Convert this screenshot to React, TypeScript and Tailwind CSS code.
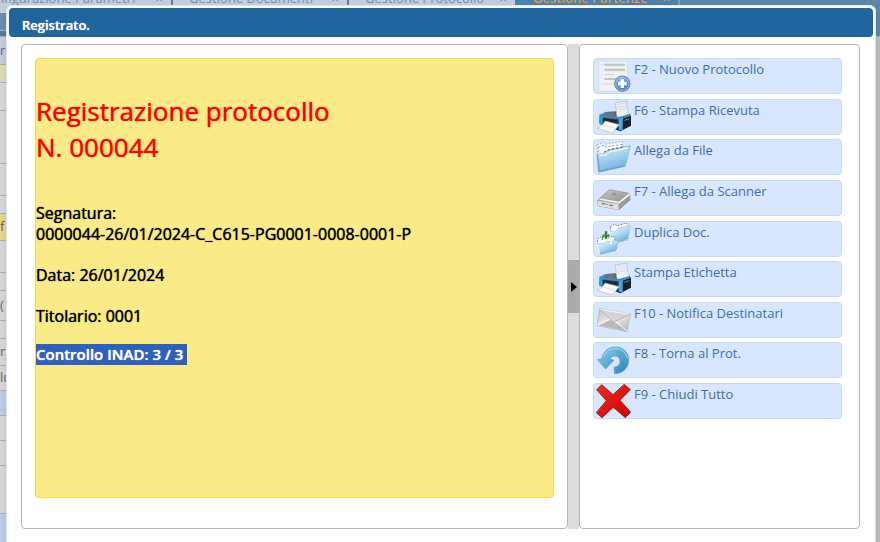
import type { ReactNode } from 'react';

type Tab = { label: string; active?: boolean; className: string };

const TABS: Tab[] = [
  { label: 'Configurazione Parametri', className: '-ml-9 w-[209px] pr-2' },
  { label: 'Gestione Documenti', className: 'w-[176px] pr-2' },
  { label: 'Gestione Protocollo', className: 'w-[168px] pr-2' },
  { label: 'Gestione Partenze', active: true, className: 'w-[163px] pr-2' },
];

// Form rows of the page that stays visible beside the dialog
const ROWS = [
  { text: '', className: 'h-[18px] bg-[#6b8cab]' },
  { text: '', className: 'h-[6px] bg-[#587b96]' },
  { text: 'r', className: 'h-[28px] bg-[#c3cbdd]' },
  { text: '', className: 'h-[18px] bg-[#ddd9b8]' },
  { text: '', className: 'h-[28px] bg-[#d5d5d5]' },
  { text: '', className: 'h-[53px] bg-[#d5d5d5]' },
  { text: '', className: 'h-[32px] bg-[#d5d5d5]' },
  { text: '', className: 'h-[18px] bg-[#d5d5d5]' },
  { text: 'f', className: 'h-[27px] bg-[#e2d48a]' },
  { text: '', className: 'h-[32px] bg-[#d5d5d5]' },
  { text: '', className: 'h-[18px] bg-[#d5d5d5]' },
  { text: '(', className: 'h-[30px] bg-[#d5d5d5]' },
  { text: '', className: 'h-[18px] bg-[#d5d5d5]' },
  { text: 'r', className: 'h-[27px] bg-[#d5d5d5]' },
  { text: 'lu', className: 'h-[25px] bg-[#d5d5d5]' },
  { text: '', className: 'h-[25px] bg-[#bccae0]' },
  { text: '', className: 'h-[25px] bg-[#d5d5d5]' },
  { text: '', className: 'h-[25px] bg-[#d5d5d5]' },
  { text: '', className: 'h-[48px] bg-[#d5d5d5]' },
  { text: '', className: 'h-[40px] bg-[#bccae0]' },
];

function Icon({ children }: { children: ReactNode }) {
  return (
    <svg viewBox="0 0 108 102" className="h-[34px] w-9 shrink-0" aria-hidden="true">
      {children}
    </svg>
  );
}

function NewDocIcon() {
  return (
    <Icon>
      <defs>
        <radialGradient id="plusFill" cx="45%" cy="30%" r="70%">
          <stop offset="0" stopColor="#9dc0ef" />
          <stop offset="1" stopColor="#3d6fbd" />
        </radialGradient>
      </defs>
      <path d="M11 6H98V96H11Z" fill="#f0f1f2" stroke="#d3d6db" strokeWidth="2" />
      <path d="M28 17H90M28 32H90M28 60H72" stroke="#bfc1c3" strokeWidth="6" />
      <path d="M28 47H56M28 75H62" stroke="#cfd1d3" strokeWidth="3" />
      <path d="M18 17h4M18 47h4M18 75h4" stroke="#c9ccd0" strokeWidth="3" />
      <circle cx="82" cy="74" r="23" fill="url(#plusFill)" stroke="#5580bd" strokeWidth="3" />
      <circle cx="82" cy="74" r="20" fill="none" stroke="#c4d8f4" strokeWidth="2" />
      <path d="M82 61V87M69 74H95" stroke="#fff" strokeWidth="10" />
    </Icon>
  );
}

function PrinterIcon() {
  return (
    <Icon>
      <defs>
        <linearGradient id="printerTop" x1="0" y1="0" x2="1" y2="1">
          <stop offset="0" stopColor="#87929b" />
          <stop offset=".5" stopColor="#343b42" />
          <stop offset="1" stopColor="#0b0f13" />
        </linearGradient>
      </defs>
      <path d="M14 46L30 36L58 34L101 38L108 48V77L76 94L60 88L14 72Z" fill="url(#printerTop)" />
      <path d="M60 9L96 3C94 18 98 30 103 43L67 53C62 38 65 23 60 9Z" fill="#edf0f2" stroke="#aeb5bb" strokeWidth="2" />
      <path d="M66 14L92 9M67 22L93 17M68 30L94 25" stroke="#cdd3d7" strokeWidth="2" />
      <path d="M28 41L57 37L65 51L88 50L74 56L22 48Z" fill="#66747f" />
      <path d="M13 44L27 39L22 73L12 70Z" fill="#349adb" />
      <path d="M16 47L73 56L104 47" fill="none" stroke="#2b91d5" strokeWidth="5" />
      <path d="M71 56L83 53V92L71 89Z" fill="#43a9e8" />
      <path d="M85 56L107 49V76L85 88Z" fill="#1b2127" />
      <path d="M88 61L103 56" stroke="#7c8891" strokeWidth="3" />
      <path d="M23 53L67 61V76L23 68Z" fill="#20262c" />
      <path d="M30 63L73 74C66 82 58 91 52 99L6 85C17 80 24 74 30 63Z" fill="#f7f8f8" stroke="#b4babf" strokeWidth="2" />
      <path d="M28 76L58 84" stroke="#dde1e4" strokeWidth="3" />
    </Icon>
  );
}

function FolderIcon() {
  return (
    <Icon>
      <defs>
        <linearGradient id="folderFront" x1="0" y1="0" x2=".4" y2="1">
          <stop offset="0" stopColor="#e2f4ff" />
          <stop offset="1" stopColor="#6fb0de" />
        </linearGradient>
      </defs>
      <path d="M6 15L27 7L31 13L82 4L86 24V79L10 94Z" fill="#f4f8fb" stroke="#829aad" strokeWidth="2" strokeDasharray="6 4" />
      <path d="M9 22L28 15L31 21L82 13L87 79L20 88Z" fill="#fafdff" stroke="#69727b" strokeWidth="2" strokeDasharray="7 5" />
      <path d="M6 42L30 41L38 31L106 17L91 79L11 97Z" fill="url(#folderFront)" stroke="#7dadcf" strokeWidth="2" />
      <path d="M13 46L33 45L41 36L98 24" fill="none" stroke="#ffffff" strokeWidth="3" />
      <path d="M26 37L43 29L69 24L86 20" fill="none" stroke="#4b5964" strokeWidth="3" strokeDasharray="8 5" />
      <path d="M8 45L14 94L86 78" fill="none" stroke="#5888ad" strokeWidth="2" />
    </Icon>
  );
}

function ScannerIcon() {
  return (
    <Icon>
      <defs>
        <linearGradient id="scannerLid" x1="0" y1="0" x2="1" y2="1">
          <stop offset="0" stopColor="#c9c9c5" />
          <stop offset="1" stopColor="#8f918f" />
        </linearGradient>
      </defs>
      <path d="M8 58L42 34L105 42V57L72 86L10 75Z" fill="#a6a8a6" stroke="#8b8c8a" strokeWidth="2" />
      <path d="M8 59L71 70V86L10 75Z" fill="#e0e0dd" />
      <path d="M71 70L105 44V57L72 86Z" fill="#9a9c9a" />
      <path d="M14 52L43 26L104 37L72 63Z" fill="url(#scannerLid)" stroke="#8b8d8a" strokeWidth="2" />
      <path d="M14 54L72 65L104 39" fill="none" stroke="#f4f4f2" strokeWidth="5" />
      <path d="M52 42L58 35L62 43" fill="none" stroke="#6581ac" strokeWidth="3" />
      <path d="M20 67L31 69M42 72L54 74" stroke="#838987" strokeWidth="5" />
      <path d="M34 70L38 71" stroke="#4f9d56" strokeWidth="4" />
    </Icon>
  );
}

function DuplicateIcon() {
  return (
    <Icon>
      <defs>
        <linearGradient id="copyFront" x1="0" y1="0" x2=".6" y2="1">
          <stop offset="0" stopColor="#f4fbff" />
          <stop offset=".5" stopColor="#b5dbf3" />
          <stop offset="1" stopColor="#5ba3d5" />
        </linearGradient>
      </defs>
      <path d="M46 14L60 6L65 12L94 3L99 11V53L51 64Z" fill="#fbfcfd" stroke="#7c8891" strokeWidth="3" strokeDasharray="5 4" />
      <path d="M42 27L62 28L70 18L106 11L98 52L49 68Z" fill="url(#copyFront)" stroke="#a3c8df" strokeWidth="2" />
      <path d="M7 50L22 43L28 50L58 43L65 83L11 96Z" fill="#fbfcfd" stroke="#75828b" strokeWidth="3" strokeDasharray="5 4" />
      <path d="M7 66L27 65L35 59L71 55L62 86L13 98Z" fill="url(#copyFront)" stroke="#8db9d6" strokeWidth="2" />
      <path d="M7 66L13 98M42 27L49 68" stroke="#f8ffff" strokeWidth="4" />
      <path d="M33 28V50M22 41H44" stroke="#2f8f2c" strokeWidth="7" />
      <path d="M22 54Q20 42 31 40" fill="none" stroke="#4aa845" strokeWidth="4" />
    </Icon>
  );
}

function MailIcon() {
  return (
    <Icon>
      <defs>
        <linearGradient id="envelope" x1="0" y1="0" x2="1" y2="1">
          <stop offset="0" stopColor="#bdbdbd" />
          <stop offset=".5" stopColor="#eeeeee" />
          <stop offset="1" stopColor="#acacac" />
        </linearGradient>
      </defs>
      <path d="M14 17L106 33L96 86L6 68Z" fill="url(#envelope)" stroke="#a9a29e" strokeWidth="2" strokeDasharray="6 3" />
      <path d="M7 67L47 50L96 84Z" fill="#b9b9b9" />
      <path d="M15 19L54 58L104 34Z" fill="#d4d4d4" stroke="#f8f8f8" strokeWidth="3" />
      <path d="M7 67L45 48M96 84L61 54" stroke="#fff" strokeWidth="3" />
      <path d="M15 19L54 58L105 34" fill="none" stroke="#858585" strokeWidth="2" />
    </Icon>
  );
}

function BackIcon() {
  return (
    <Icon>
      <defs>
        <linearGradient id="backArrow" x1="0" y1="0" x2="1" y2="1">
          <stop offset="0" stopColor="#8cd0e9" />
          <stop offset="1" stopColor="#2684b7" />
        </linearGradient>
      </defs>
      <path
        d="M21 47C23 25 41 12 62 12C85 12 101 29 101 50C101 74 85 90 62 92L58 91V72C69 72 76 64 75 54C74 44 68 39 60 39C51 39 46 43 46 49L57 51L32 78L7 50Z"
        fill="url(#backArrow)"
        stroke="#4ba3c8"
        strokeWidth="2"
      />
      <path d="M26 43C31 24 44 17 62 17C80 17 95 30 97 47" fill="none" stroke="#a9ddef" strokeWidth="3" />
    </Icon>
  );
}

function CloseIcon() {
  return (
    <Icon>
      <defs>
        <linearGradient id="cross" x1="0" y1="0" x2="1" y2="1">
          <stop offset="0" stopColor="#f52c22" />
          <stop offset="1" stopColor="#c90000" />
        </linearGradient>
      </defs>
      <path
        d="M5 17L20 2L54 32L88 1L106 17L75 49L107 85L91 101L55 70L21 101L4 86L34 50Z"
        fill="url(#cross)"
        stroke="#a52017"
        strokeWidth="3"
      />
    </Icon>
  );
}

const ACTIONS = [
  { label: 'F2 - Nuovo Protocollo', icon: NewDocIcon },
  { label: 'F6 - Stampa Ricevuta', icon: PrinterIcon },
  { label: 'Allega da File', icon: FolderIcon },
  { label: 'F7 - Allega da Scanner', icon: ScannerIcon },
  { label: 'Duplica Doc.', icon: DuplicateIcon },
  { label: 'Stampa Etichetta', icon: PrinterIcon },
  { label: 'F10 - Notifica Destinatari', icon: MailIcon },
  { label: 'F8 - Torna al Prot.', icon: BackIcon },
  { label: 'F9 - Chiudi Tutto', icon: CloseIcon },
];

function tabClass(tab: Tab) {
  const tone = tab.active
    ? 'border-[#7d9db8] bg-[#5080a6] font-semibold text-[#dd9a4e]'
    : 'border-[#4f7fa5] bg-[#c5cbd9] text-[#6f91b3]';
  return `flex h-6 shrink-0 items-start justify-between border-r-2 pl-4 ${tone} ${tab.className}`;
}

function PageBehind() {
  return (
    <div className="absolute inset-0 overflow-hidden bg-[#bcbcbc]" aria-hidden="true">
      <div className="flex h-[13px] items-end overflow-hidden bg-[#5c86a8] text-[13px] leading-[18px]">
        {TABS.map((tab) => (
          <div key={tab.label} className={tabClass(tab)}>
            <span>{tab.label}</span>
            <span className="font-bold">×</span>
          </div>
        ))}
      </div>
      <div className="flex justify-between text-[13px] text-[#666]">
        <div className="w-2 overflow-hidden">
          {ROWS.map((row, i) => (
            <div key={i} className={`flex items-center border-b border-b-[#9bb5c8] ${row.className}`}>
              {row.text}
            </div>
          ))}
        </div>
        <div className="h-6 w-8 border-b border-[#9bb5c8] bg-[#5c86a8]" />
      </div>
    </div>
  );
}

export default function App() {
  return (
    <div className="relative min-h-screen overflow-hidden font-['Open_Sans',sans-serif]">
      <PageBehind />
      <div
        role="dialog"
        aria-labelledby="dialog-title"
        className="relative mt-[5px] mr-1 ml-1.5 min-h-[560px] rounded-md border border-[#d9e8f4] bg-[#fdfdfd] p-0.5 shadow-md"
      >
        <h1
          id="dialog-title"
          className="flex h-[29px] items-center rounded-sm bg-[#21659f] px-[13px] pt-1.5 text-[13px] font-semibold text-white [text-shadow:0_0_1px_currentColor]"
        >
          Registrato.
        </h1>
        <main className="mt-[7px] mr-[13px] ml-3 flex h-[485px]">
          <section className="min-w-0 flex-1 rounded border border-[#b4b4b4] bg-white p-[13px]">
            <div className="h-[440px] rounded border border-[#f0d84f] bg-[#fbeb88] pt-[34px] text-base leading-[21px] text-black [text-shadow:0_0_1px_currentColor]">
              <h2 className="text-[26px] leading-9 text-[#ff0000]">
                Registrazione protocollo
                <br />
                N. 000044
              </h2>
              <div className="mt-[38px]">
                <p>Segnatura:</p>
                <p>0000044-26/01/2024-C_C615-PG0001-0008-0001-P</p>
                <p className="mt-5">Data: 26/01/2024</p>
                <p className="mt-5">Titolario: 0001</p>
              </div>
              <p className="mt-[17px]">
                <mark className="inline-block bg-[#2f60bd] pr-1 text-[15px] font-semibold text-white">
                  Controllo INAD: 3 / 3
                </mark>
              </p>
            </div>
          </section>
          <div className="flex w-[11px] items-center bg-[#dcdcdc]">
            <button
              type="button"
              aria-label="Comprimi pannello"
              className="flex h-[53px] w-full items-center justify-center bg-[#ababab]"
            >
              <svg viewBox="0 0 6 10" className="h-2.5 w-1.5" aria-hidden="true">
                <path d="M0 0L6 5L0 10Z" fill="#000" />
              </svg>
            </button>
          </div>
          <section className="w-[281px] shrink-0 rounded border border-[#b4b4b4] bg-white py-[13px] pr-[17px] pl-[13px]">
            <div className="flex h-[361px] flex-col justify-between">
              {ACTIONS.map(({ label, icon: ActionIcon }) => (
                <button
                  key={label}
                  type="button"
                  className="flex h-9 w-full items-start gap-[3px] rounded border border-[#c3daf0] bg-[#d8e6ff] pl-px text-left text-[13px] leading-5 text-[#3c6ea5]"
                >
                  <ActionIcon />
                  <span>{label}</span>
                </button>
              ))}
            </div>
          </section>
        </main>
      </div>
    </div>
  );
}
